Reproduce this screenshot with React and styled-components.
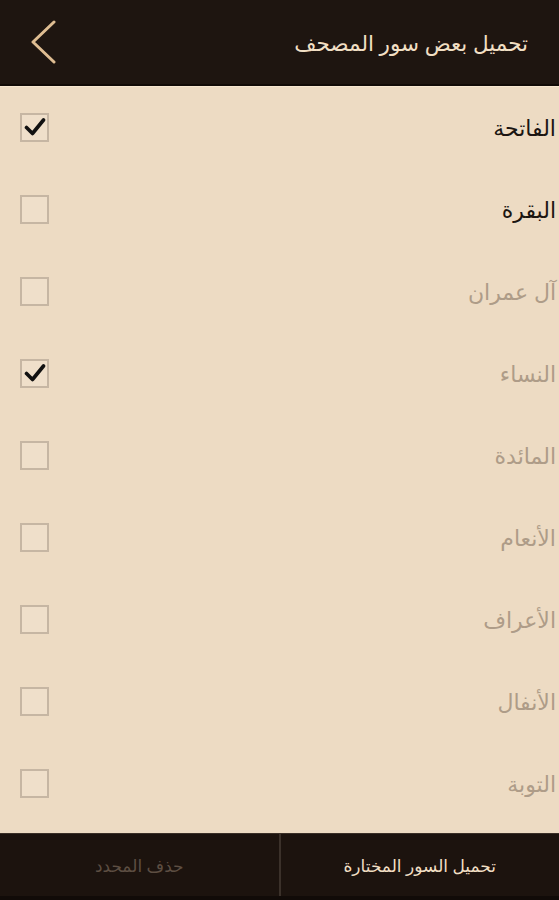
import React, { useState } from "react";
import styled, { createGlobalStyle } from "styled-components";

const GlobalStyle = createGlobalStyle`
  html, body {
    margin: 0;
    padding: 0;
    background: #eddbc3;
  }
  body {
    font-family: "Noto Sans", "DejaVu Sans", sans-serif;
  }
`;

const Screen = styled.div`
  width: 559px;
  height: 900px;
  display: flex;
  flex-direction: column;
  background: #eddbc3;
  overflow: hidden;
`;

const Header = styled.header`
  height: 84px;
  flex-shrink: 0;
  display: flex;
  align-items: center;
  justify-content: space-between;
  padding: 0 31px 0 30px;
  background: #1e1510;
  border-bottom: 2px solid #110b07;
  box-shadow: 0 1px 0 #f7e7d0;
`;

const BackButton = styled.button`
  background: none;
  border: 0;
  padding: 0;
  width: 28px;
  height: 44px;
  display: flex;
  align-items: center;
  cursor: pointer;
`;

const Title = styled.h1`
  margin: 0;
  font-size: 21.5px;
  font-weight: 500;
  color: #f1dfc4;
  direction: rtl;
`;

const List = styled.ul`
  list-style: none;
  margin: 0;
  padding: 0;
  flex: 1;
  display: flex;
  flex-direction: column;
`;

const Row = styled.li`
  height: 82px;
  flex-shrink: 0;
  display: flex;
  align-items: center;
  justify-content: space-between;
  padding: 0 3px 0 20px;
`;

const Box = styled.span`
  width: 29px;
  height: 29px;
  box-sizing: border-box;
  border: 2px solid #c6b6a3;
  background: #efdfca;
  display: flex;
  align-items: center;
  justify-content: center;
  cursor: pointer;
`;

const Name = styled.span`
  direction: rtl;
  font-size: 22px;
  color: ${(p) => (p.$active ? "#1b1511" : "#ae9c88")};
  font-weight: ${(p) => (p.$active ? 500 : 400)};
`;

const Footer = styled.footer`
  height: 62px;
  flex-shrink: 0;
  display: flex;
  background: #1c130e;
  border-top: 1px solid #3a2f27;
  border-bottom: 4px solid #110b08;
`;

const FooterButton = styled.button`
  flex: 1;
  background: none;
  border: 0;
  font-family: inherit;
  font-size: 17px;
  direction: rtl;
  color: ${(p) => (p.$muted ? "#5d4e42" : "#f1dfc4")};
  & + & {
    border-left: 2px solid #3b312a;
  }
`;

const surahs = [
  { name: "الفاتحة", active: true, checked: true },
  { name: "البقرة", active: true, checked: false },
  { name: "آل عمران", active: false, checked: false },
  { name: "النساء", active: false, checked: true },
  { name: "المائدة", active: false, checked: false },
  { name: "الأنعام", active: false, checked: false },
  { name: "الأعراف", active: false, checked: false },
  { name: "الأنفال", active: false, checked: false },
  { name: "التوبة", active: false, checked: false },
];

const Check = () => (
  <svg width="22" height="20" viewBox="0 0 22 20">
    <path
      d="M2.5 10.5 L8.5 16.5 L19.5 3"
      fill="none"
      stroke="#111"
      strokeWidth="3.6"
      strokeLinecap="round"
      strokeLinejoin="round"
    />
  </svg>
);

export default function App() {
  const [checked, setChecked] = useState(surahs.map((s) => s.checked));
  const toggle = (i) =>
    setChecked((c) => c.map((v, j) => (j === i ? !v : v)));

  return (
    <Screen>
      <GlobalStyle />
      <Header>
        <BackButton aria-label="back">
          <svg width="28" height="44" viewBox="0 0 28 44">
            <path
              d="M24 2 L3 22 L24 42"
              fill="none"
              stroke="#dfbd92"
              strokeWidth="3"
              strokeLinecap="round"
              strokeLinejoin="round"
            />
          </svg>
        </BackButton>
        <Title>تحميل بعض سور المصحف</Title>
      </Header>
      <List>
        {surahs.map((s, i) => (
          <Row key={s.name}>
            <Box onClick={() => toggle(i)}>{checked[i] && <Check />}</Box>
            <Name $active={s.active}>{s.name}</Name>
          </Row>
        ))}
      </List>
      <Footer>
        <FooterButton $muted>حذف المحدد</FooterButton>
        <FooterButton>تحميل السور المختارة</FooterButton>
      </Footer>
    </Screen>
  );
}
